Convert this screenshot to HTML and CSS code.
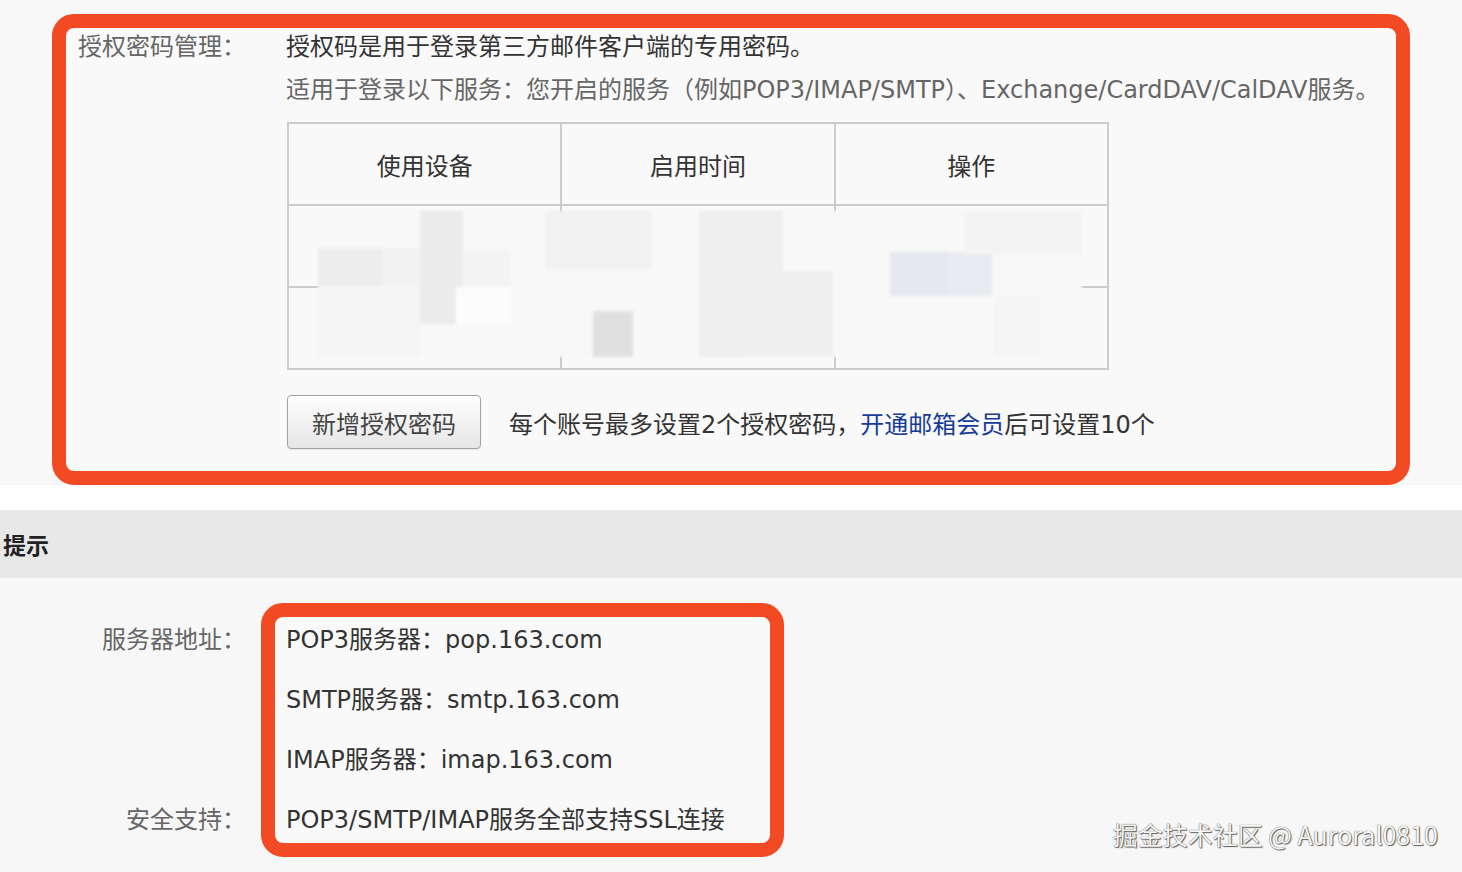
FILE: index.html
```html
<!DOCTYPE html>
<html lang="zh-CN">
  <head>
    <meta charset="UTF-8" />
    <meta name="viewport" content="width=device-width, initial-scale=1.0" />
    <title>客户端授权密码</title>
    <link rel="stylesheet" href="styles.css">
  </head>
  <body>
    <!-- Auth code section -->
    <div class="auth-section">
      <div class="highlight auth-box">
        <div class="form-row">
          <div class="form-label">授权密码管理：</div>
          <div class="form-field">
            <p class="intro">授权码是用于登录第三方邮件客户端的专用密码。</p>
            <p class="scope">适用于登录以下服务：您开启的服务（例如POP3/IMAP/SMTP）、Exchange/CardDAV/CalDAV服务。</p>

            <div class="device-table">
              <table class="table">
                <thead>
                  <tr>
                    <th>使用设备</th>
                    <th>启用时间</th>
                    <th>操作</th>
                  </tr>
                </thead>
                <tbody>
                  <tr><td></td><td></td><td></td></tr>
                  <tr><td></td><td></td><td></td></tr>
                </tbody>
              </table>

              <!-- Mosaic over private rows -->
              <div class="mosaic">
                <span class="tile tile-a"></span>
                <span class="tile tile-b"></span>
                <span class="tile tile-c"></span>
                <span class="tile tile-d"></span>
                <span class="tile tile-e"></span>
                <span class="tile tile-f"></span>
                <span class="tile tile-g"></span>
                <span class="tile tile-h"></span>
                <span class="tile tile-i"></span>
                <span class="tile tile-j"></span>
                <span class="tile tile-k"></span>
                <span class="tile tile-l"></span>
                <span class="tile tile-m"></span>
                <span class="tile tile-n"></span>
              </div>
            </div>

            <div class="actions">
              <button class="add-btn">新增授权密码</button>
              <span class="limit-note">每个账号最多设置2个授权密码，<a href="#" class="vip-link">开通邮箱会员</a>后可设置10个</span>
            </div>
          </div>
        </div>
      </div>
    </div>

    <!-- Tips -->
    <div class="tips-bar">提示</div>
    <div class="tips-section">
      <div class="tips-labels">
        <div class="form-label">服务器地址：</div>
        <div class="form-label ssl-label">安全支持：</div>
      </div>
      <div class="highlight server-box">
        <p>POP3服务器：pop.163.com</p>
        <p>SMTP服务器：smtp.163.com</p>
        <p>IMAP服务器：imap.163.com</p>
        <p>POP3/SMTP/IMAP服务全部支持SSL连接</p>
      </div>
    </div>

    <div class="watermark">掘金技术社区 @ Auroral0810</div>
  </body>
</html>
```

FILE: styles.css
```css
body {
  font-family: "DejaVu Sans", "Noto Sans CJK SC", sans-serif;
  font-size: 24px;
  color: #333;
  background-color: #fff;
  margin: 0;
  padding: 0;
  position: relative;
  min-height: 872px;
}

p {
  margin: 0;
}

/* Orange annotation frame */
.highlight {
  box-sizing: border-box;
  border: 14px solid #f24a23;
  border-radius: 22px;
  background-color: #f9f9f9;
}

/* Auth code section */
.auth-section {
  background-color: #f8f8f8;
  padding: 14px 0 0 52px;
}

.auth-box {
  width: 1358px;
  margin-bottom: -13px;
  padding: 1px 0 22px 12px;
}

.form-row {
  display: flex;
  gap: 40px;
}

.form-label {
  width: 168px;
  line-height: 36px;
  color: #666;
  white-space: nowrap;
}

.intro {
  line-height: 36px;
  color: #333;
}

.scope {
  margin-top: 7px;
  line-height: 36px;
  color: #666;
  white-space: nowrap;
}

.device-table {
  position: relative;
  margin-top: 14px;
  margin-left: 1px;
  width: 822px;
}

.table {
  width: 822px;
  border-collapse: collapse;
  table-layout: fixed;
}

th,
td {
  border: 2px solid #ccc;
  height: 80px;
  padding: 0;
  text-align: center;
}

th {
  font-weight: normal;
  color: #333;
}

.mosaic {
  position: absolute;
  left: 31px;
  top: 89px;
  width: 764px;
  height: 146px;
  background-color: #f8f8f8;
  filter: blur(1.5px);
}

.tile {
  position: absolute;
  display: block;
}

.tile-a { left: 0; top: 37px; width: 64px; height: 38px; background: #ededed; }
.tile-b { left: 64px; top: 37px; width: 38px; height: 38px; background: #f2f2f2; }
.tile-c { left: 102px; top: 0; width: 43px; height: 113px; background: #ebebeb; }
.tile-d { left: 145px; top: 40px; width: 47px; height: 35px; background: #f3f3f3; }
.tile-e { left: 0; top: 75px; width: 102px; height: 71px; background: #f5f5f5; }
.tile-f { left: 138px; top: 76px; width: 54px; height: 37px; background: #fcfcfc; }
.tile-g { left: 227px; top: 0; width: 107px; height: 58px; background: #f1f1f1; }
.tile-h { left: 275px; top: 100px; width: 40px; height: 46px; background: #e0e0e0; }
.tile-i { left: 381px; top: 0; width: 84px; height: 146px; background: #eeeeee; }
.tile-j { left: 422px; top: 60px; width: 93px; height: 86px; background: #efefef; }
.tile-k { left: 572px; top: 41px; width: 59px; height: 44px; background: #e5e8f0; }
.tile-l { left: 631px; top: 41px; width: 43px; height: 44px; background: #e9ebf0; }
.tile-m { left: 647px; top: 0; width: 115px; height: 43px; background: #f3f3f3; }
.tile-n { left: 676px; top: 86px; width: 46px; height: 60px; background: #f5f5f5; }

.actions {
  display: flex;
  align-items: center;
  gap: 28px;
  margin-top: 25px;
  margin-left: 1px;
}

.add-btn {
  width: 194px;
  height: 54px;
  font-family: inherit;
  font-size: 24px;
  color: #444;
  border: 1px solid #a2a2a2;
  border-radius: 4px;
  background: linear-gradient(#fefefe, #e6e6e6);
  box-shadow: 0 1px 1px rgba(0, 0, 0, 0.08);
  padding: 0;
}

.limit-note {
  color: #333;
}

.vip-link {
  color: #173c98;
  text-decoration: none;
}

/* Tips */
.tips-bar {
  margin-top: 38px;
  height: 68px;
  line-height: 68px;
  padding-left: 3px;
  background-color: #e8e8e8;
  font-family: "Noto Sans CJK SC", sans-serif;
  font-weight: bold;
  font-size: 23px;
  color: #222;
}

.tips-section {
  display: flex;
  align-items: flex-start;
  background-color: #f7f7f7;
  padding-top: 25px;
  min-height: 294px;
  box-sizing: border-box;
}

.tips-labels {
  width: 246px;
  padding-top: 19px;
  display: flex;
  flex-direction: column;
  align-items: flex-end;
}

.tips-labels .form-label {
  width: auto;
}

.ssl-label {
  margin-top: 144px;
}

.server-box {
  margin-left: 15px;
  width: 523px;
  padding: 5px 11px;
  display: flex;
  flex-direction: column;
  gap: 24px;
}

.server-box p {
  line-height: 36px;
  color: #333;
  white-space: nowrap;
}

/* Watermark */
.watermark {
  position: absolute;
  right: 24px;
  top: 816px;
  font-family: "Noto Sans CJK SC", sans-serif;
  font-size: 25px;
  color: #f6f6f6;
  text-shadow: 0 0 1px #333, 1px 1px 1px #666;
  white-space: nowrap;
}
```
